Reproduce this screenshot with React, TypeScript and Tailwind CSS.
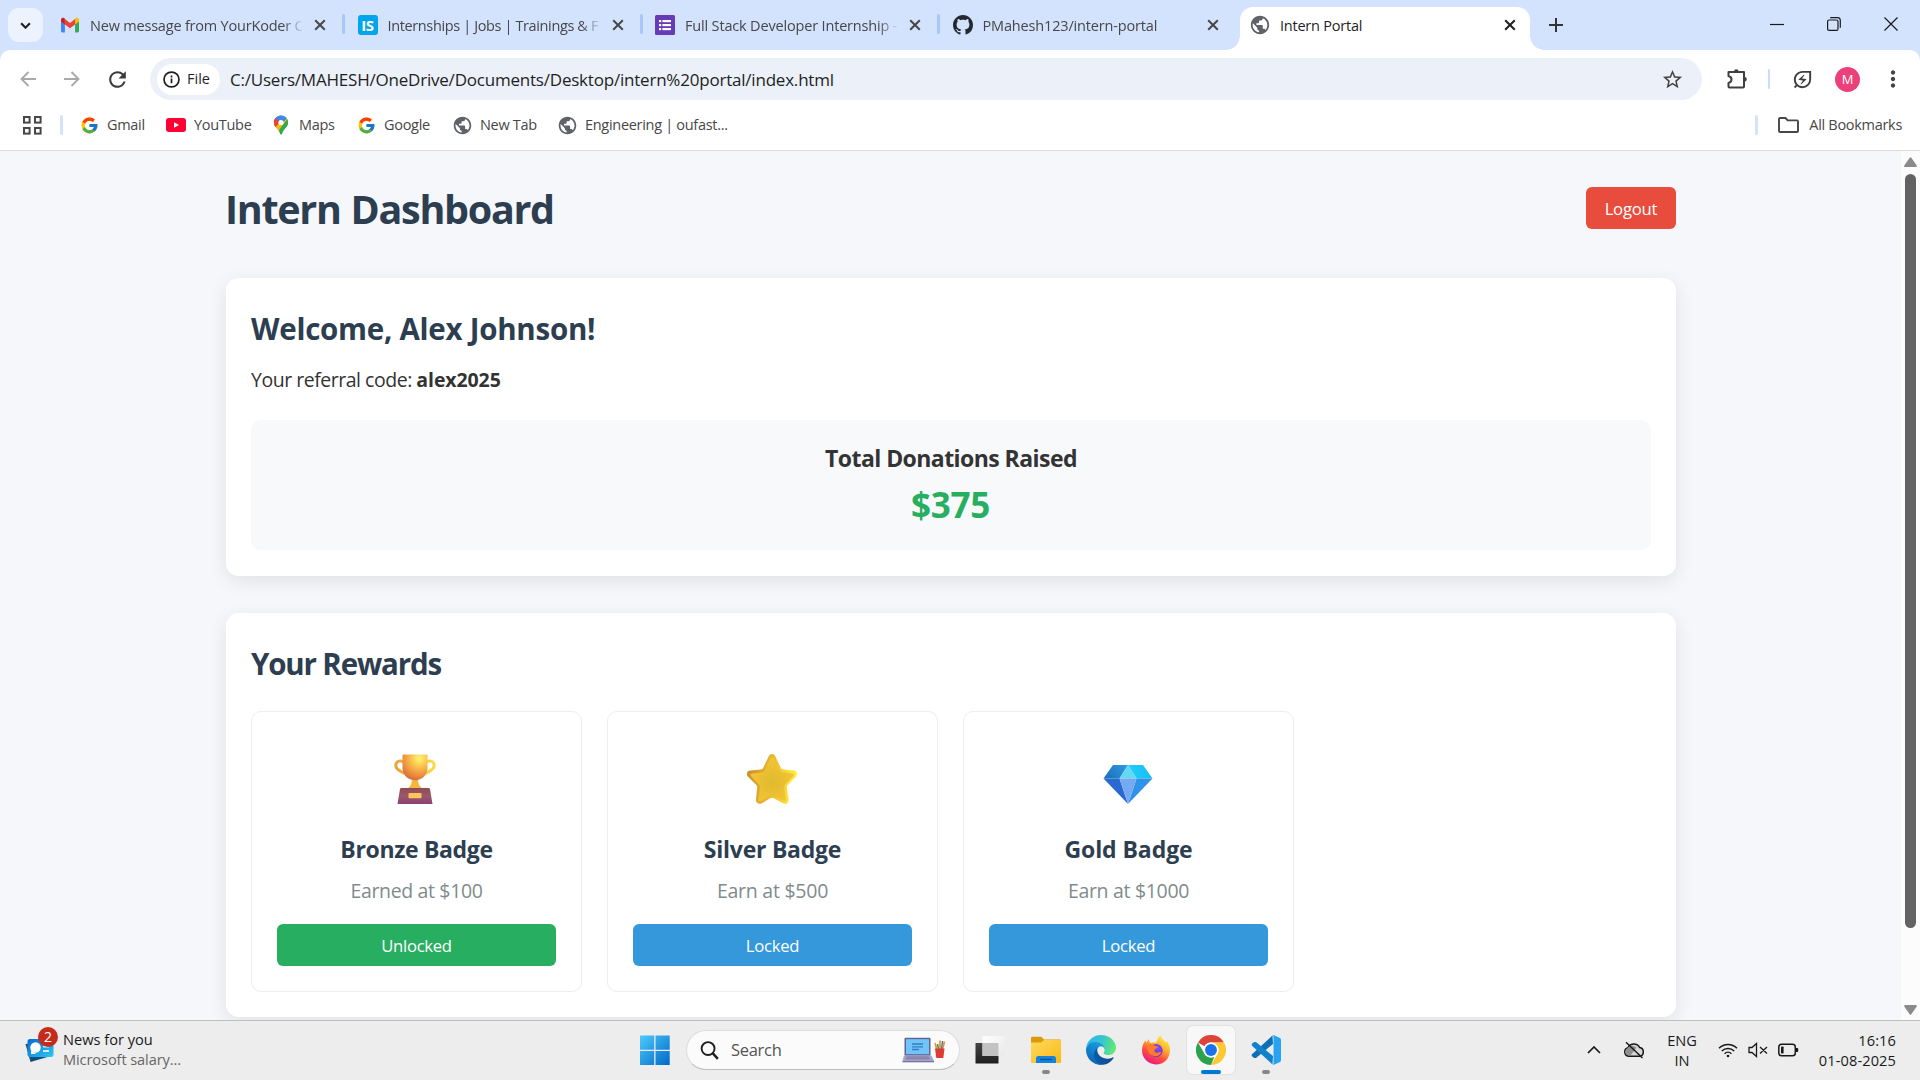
import React from "react";
import { FcGoogle } from "react-icons/fc";
import {
  MdPublic,
  MdStarBorder,
  MdMoreVert,
  MdRefresh,
  MdOutlineEnergySavingsLeaf,
} from "react-icons/md";

/* ---------- Brand and favicon drawings ---------- */

function GmailIcon() {
  return (
    <svg viewBox="0 0 20 20" className="size-5">
      <path d="M1 5.5V16a1.4 1.4 0 0 0 1.4 1.4h2.5V8.6z" fill="#4285f4" />
      <path d="M15.1 8.6v8.8h2.5A1.4 1.4 0 0 0 19 16V5.5z" fill="#34a853" />
      <path d="M15.1 4.1v5.4L19 6.6V4.8c0-1.8-2-2.8-3.4-1.7z" fill="#fbbc04" />
      <path d="M4.9 9.5V4.1L10 7.9l5.1-3.8v5.4L10 13.3z" fill="#ea4335" />
      <path d="M1 4.8v1.8l3.9 2.9V4.1l-.5-1C3 2 1 3 1 4.8z" fill="#c5221f" />
    </svg>
  );
}

function InternshalaIcon() {
  return (
    <span className="flex size-5 items-center justify-center rounded-[3px] bg-[#00a5ec] font-['Open_Sans',sans-serif] text-[15px] font-bold leading-none tracking-[-0.3px] text-white">
      IS
    </span>
  );
}

function FormsIcon() {
  return (
    <svg viewBox="0 0 20 20" className="size-5">
      <rect width="20" height="20" rx="1.5" fill="#673ab7" />
      <g fill="#fff">
        <rect x="4" y="5" width="2.2" height="2.2" />
        <rect x="4" y="9" width="2.2" height="2.2" />
        <rect x="4" y="13" width="2.2" height="2.2" />
        <rect x="7.4" y="5" width="8.6" height="2.2" />
        <rect x="7.4" y="9" width="8.6" height="2.2" />
        <rect x="7.4" y="13" width="8.6" height="2.2" />
      </g>
    </svg>
  );
}

function GithubIcon() {
  return (
    <svg viewBox="0 0 16 16" className="size-5" fill="#24292f">
      <path d="M8 0C3.58 0 0 3.58 0 8c0 3.54 2.29 6.53 5.47 7.59.4.07.55-.17.55-.38 0-.19-.01-.82-.01-1.49-2.01.37-2.53-.49-2.69-.94-.09-.23-.48-.94-.82-1.13-.28-.15-.68-.52-.01-.53.63-.01 1.08.58 1.23.82.72 1.21 1.87.87 2.33.66.07-.52.28-.87.51-1.07-1.78-.2-3.64-.89-3.64-3.95 0-.87.31-1.59.82-2.15-.08-.2-.36-1.02.08-2.12 0 0 .67-.21 2.2.82.64-.18 1.32-.27 2-.27s1.36.09 2 .27c1.53-1.04 2.2-.82 2.2-.82.44 1.1.16 1.92.08 2.12.51.56.82 1.27.82 2.15 0 3.07-1.87 3.75-3.65 3.95.29.25.54.73.54 1.48 0 1.07-.01 1.93-.01 2.2 0 .21.15.46.55.38A8.01 8.01 0 0 0 16 8c0-4.42-3.58-8-8-8z" />
    </svg>
  );
}

function YouTubeIcon() {
  return (
    <svg viewBox="0 0 20 20" className="size-5">
      <rect y="3" width="20" height="14" rx="3" fill="#ff0033" />
      <path d="M8 7.2v5.6l5-2.8z" fill="#fff" />
    </svg>
  );
}

function MapsIcon() {
  return (
    <svg viewBox="0 0 20 20" className="size-5">
      <clipPath id="pin">
        <path d="M10 .5a7 7 0 0 0-7 7c0 5 4.4 5.600 6 11.200.3 1 1.700 1 2 0C12.600 13.100 17 12.500 17 7.500a7 7 0 0 0-7-7z" />
      </clipPath>
      <g clipPath="url(#pin)">
        <rect width="20" height="20" fill="#34a853" />
        <path d="M0 14L16 0h4v3L5 20z" fill="#fbbc04" />
        <path d="M4 2l5 5-7 8-2-8z" fill="#ea4335" />
        <path d="M4 2L10-1l7 3.500L9 10z" fill="#4285f4" />
        <path d="M4 2.500L9 7 3 13V3z" fill="#ea4335" />
        <path d="M17 3L8 15l3 5 9-8z" fill="#34a853" />
      </g>
      <circle cx="10" cy="7.500" r="2.600" fill="#fff" />
    </svg>
  );
}

const Globe = () => <MdPublic className="size-[22px] text-[#5f6368]" />;

/* ---------- Tab strip ---------- */

function CloseX({ dark }: { dark?: boolean }) {
  return (
    <svg viewBox="0 0 12 12" className="size-3 shrink-0" stroke={dark ? "#1f1f1f" : "#474747"} strokeWidth="2" fill="none">
      <path d="M1.200 1.200l9.600 9.600M10.800 1.200L1.200 10.800" />
    </svg>
  );
}

const tabs = [
  { icon: <GmailIcon />, title: "New message from YourKoder C", cls: "tracking-[-0.2px]" },
  { icon: <InternshalaIcon />, title: "Internships | Jobs | Trainings & F", cls: "tracking-[-0.37px]" },
  { icon: <FormsIcon />, title: "Full Stack Developer Internship -", cls: "tracking-[-0.17px]" },
  { icon: <GithubIcon />, title: "PMahesh123/intern-portal", cls: "tracking-[-0.16px]" },
];

function TabStrip() {
  return (
    <div className="flex h-[50px] items-start bg-[#d3e3fd] text-[14.5px] text-[#474747]">
      <div className="ml-2 mt-2 flex h-[34px] w-[35px] items-center justify-center rounded-[11px] bg-[#ecf2fe]">
        <svg viewBox="0 0 12 8" className="h-[7px] w-[11px]" fill="none" stroke="#1f1f1f" strokeWidth="2.400">
          <path d="M1 1.500l5 5 5-5" />
        </svg>
      </div>
      <div className="ml-[7px] flex">
        {tabs.map((t, i) => (
          <div key={t.title} className="flex h-[50px] w-[297.500px] items-center pl-[10px]">
            <span className="flex size-5 shrink-0">{t.icon}</span>
            <span className={"ml-[10px] w-[212px] whitespace-nowrap pt-px [mask-image:linear-gradient(to_right,#000_91%,transparent_101%)] " + t.cls}>
              {t.title}
            </span>
            <span className="ml-[12px] flex"><CloseX /></span>
            <span className={i < 3 ? "ml-[16px] -mt-[2px] h-5 w-[3px] rounded bg-[#a8c7fa]" : "hidden"} />
          </div>
        ))}
        <div className="relative mt-[7px] flex h-[43px] w-[290px] items-center rounded-t-[13px] bg-white pl-[9px] pb-[7px] text-[#1f1f1f] before:absolute before:bottom-0 before:-left-[14px] before:size-[14px] before:bg-[radial-gradient(circle_at_0_0,transparent_13.500px,#fff_14px)] after:absolute after:bottom-0 after:-right-[14px] after:size-[14px] after:bg-[radial-gradient(circle_at_100%_0,transparent_13.500px,#fff_14px)]">
          <Globe />
          <span className="ml-[9px] w-[224px] pt-px tracking-[-0.22px]">Intern Portal</span>
          <CloseX dark />
        </div>
      </div>
      <svg viewBox="0 0 14 14" className="ml-[19px] mt-[18px] size-[14px]" stroke="#333" strokeWidth="2">
        <path d="M7 0v14M0 7h14" />
      </svg>
      <div className="ml-auto mr-[22px] mt-[17px] flex items-center gap-[43px] text-[#1a1a1a]">
        <svg viewBox="0 0 14 14" className="size-[14px]" stroke="currentColor" strokeWidth="1.200"><path d="M0 7.500h14" /></svg>
        <svg viewBox="0 0 14 14" className="size-[14px]" fill="none" stroke="currentColor" strokeWidth="1.200">
          <rect x=".6" y="3" width="10.400" height="10.400" rx="1.500" />
          <path d="M3.200 .7h7.300a2.800 2.800 0 0 1 2.800 2.800v7.300" />
        </svg>
        <svg viewBox="0 0 14 14" className="size-[14px]" stroke="currentColor" strokeWidth="1.200"><path d="M.5.500l13 13M13.500.500l-13 13" /></svg>
      </div>
    </div>
  );
}

/* ---------- Toolbar ---------- */

function Toolbar() {
  return (
    <div className="bg-[#d3e3fd]">
      <div className="flex h-[58px] items-center rounded-t-[10px] bg-white pl-[20px]">
        <svg viewBox="0 0 16 16" className="size-4" fill="none" stroke="#a9a9a9" strokeWidth="1.900">
          <path d="M16 8H1.500M8.500 1L1.500 8l7 7" />
        </svg>
        <svg viewBox="0 0 16 16" className="ml-[28px] size-4" fill="none" stroke="#a9a9a9" strokeWidth="1.900">
          <path d="M0 8h14.500M7.500 1l7 7-7 7" />
        </svg>
        <MdRefresh className="ml-[25px] size-[25px] text-[#3c3c3c]" />
        <div className="ml-[20px] flex h-[42px] w-[1552px] items-center rounded-full bg-[#ebf0f9] pl-[7px]">
          <div className="flex h-[31px] w-[63px] items-center rounded-full bg-white pl-[6px] text-[14.5px] font-medium text-[#1f1f1f]">
            <svg viewBox="0 0 18 18" className="size-[17px]" fill="none" stroke="#1f1f1f" strokeWidth="1.800">
              <circle cx="9" cy="9" r="7.900" />
              <path d="M9 8v5M9 4.800v2" />
            </svg>
            <span className="ml-[7px]">File</span>
          </div>
          <span className="ml-[10px] pt-px text-[17px] tracking-[-0.21px] text-[#1f1f1f]">
            C:/Users/MAHESH/OneDrive/Documents/Desktop/intern%20portal/index.html
          </span>
          <MdStarBorder className="ml-auto mr-[18px] size-[23px] text-[#444]" />
        </div>
        <svg viewBox="0 0 22 22" className="ml-[24px] size-[22px]" fill="none" stroke="#3f3f3f" strokeWidth="2" strokeLinejoin="round">
          <path d="M2.500 4H18v14.500a1 1 0 0 1-1 1H3.500a1 1 0 0 1-1-1V15c4-1 4-6 0-7z" />
          <path d="M8 3.500a2.300 2.300 0 0 1 4.600 0zM18.500 9a2.300 2.300 0 0 1 0 4.600z" fill="#3f3f3f" stroke="none" />
        </svg>
        <span className="ml-[20px] h-5 w-[2px] rounded bg-[#c9dcfb]" />
        <MdOutlineEnergySavingsLeaf className="ml-[21px] size-[23px] text-[#3f3f3f]" />
        <span className="ml-[21px] flex size-[25px] items-center justify-center rounded-full bg-[#ec407a] text-[13px] leading-none text-white">M</span>
        <MdMoreVert className="ml-[20px] size-[26px] text-[#444]" />
      </div>
    </div>
  );
}

/* ---------- Bookmarks bar ---------- */

function Bookmark({ icon, cls, children }: { icon: React.ReactNode; cls: string; children: React.ReactNode }) {
  return (
    <div className={"flex items-center " + cls}>
      <span className="flex w-[22px] shrink-0 justify-center">{icon}</span>
      <span className="ml-[7px] whitespace-nowrap">{children}</span>
    </div>
  );
}

function BookmarksBar() {
  const g = <FcGoogle className="size-[19px]" />;
  return (
    <div className="flex h-[43px] items-center border-b border-[#dcdcdc] bg-white pb-[8px] text-[14.500px] tracking-[-0.3px] text-[#474747]">
      <svg viewBox="0 0 19 19" className="ml-[23px] size-[19px]" fill="none" stroke="#474747" strokeWidth="2">
        <rect x="1" y="1" width="5.600" height="5.600" />
        <rect x="12" y="1" width="5.600" height="5.600" />
        <rect x="1" y="12" width="5.600" height="5.600" />
        <rect x="12" y="12" width="5.600" height="5.600" />
      </svg>
      <span className="ml-[18px] h-5 w-[3px] rounded bg-[#d3e3fd]" />
      <Bookmark icon={g} cls="ml-[15px] w-[87px]">Gmail</Bookmark>
      <Bookmark icon={<YouTubeIcon />} cls="w-[105px]">YouTube</Bookmark>
      <Bookmark icon={<MapsIcon />} cls="w-[85px]">Maps</Bookmark>
      <Bookmark icon={g} cls="w-[96px]">Google</Bookmark>
      <Bookmark icon={<MdPublic className="size-[21px] text-[#5f6368]" />} cls="w-[105px]">New Tab</Bookmark>
      <Bookmark icon={<MdPublic className="size-[21px] text-[#5f6368]" />} cls="">Engineering | oufast...</Bookmark>
      <span className="ml-auto h-5 w-[3px] rounded bg-[#d3e3fd]" />
      <svg viewBox="0 0 21 16" className="ml-[20px] h-4 w-[21px]" fill="none" stroke="#474747" strokeWidth="1.900" strokeLinejoin="round">
        <path d="M1 2a1 1 0 0 1 1-1h5.500l2.200 2.400H19a1 1 0 0 1 1 1V14a1 1 0 0 1-1 1H2a1 1 0 0 1-1-1z" />
      </svg>
      <span className="ml-[10px] mr-[18px]">All Bookmarks</span>
    </div>
  );
}

/* ---------- Reward artwork ---------- */

function Trophy() {
  return (
    <svg viewBox="0 0 42 50" className="-ml-[3px] h-[50px] w-[42px]">
      <defs>
        <radialGradient id="cup" cx=".68" cy=".15" r=".85">
          <stop offset="0" stopColor="#fff778" />
          <stop offset=".35" stopColor="#fcc850" />
          <stop offset=".8" stopColor="#ea8c3e" />
          <stop offset="1" stopColor="#d9703f" />
        </radialGradient>
        <linearGradient id="handle" gradientUnits="userSpaceOnUse" x1="0" y1="0" x2="42" y2="0">
          <stop offset="0" stopColor="#e8a03a" />
          <stop offset="1" stopColor="#ffdc40" />
        </linearGradient>
        <linearGradient id="base" x2="0" y2="1">
          <stop offset="0" stopColor="#8f4a55" />
          <stop offset=".5" stopColor="#9b586a" />
          <stop offset="1" stopColor="#8b4074" />
        </linearGradient>
      </defs>
      <path d="M10 8C5 5.500 1.800 8 1.800 11.500c0 4.500 5 5.500 9 8M32 8c5-2.500 8.200 0 8.200 3.500 0 4.500-5 5.500-9 8" fill="none" stroke="url(#handle)" strokeWidth="3" />
      <path d="M18 24h6c0 6 1.500 8.500 5 11H13c3.500-2.500 5-5 5-11z" fill="#f5b63c" />
      <path d="M9.500.500h23a1 1 0 0 1 1 1V14c0 7-5.500 12.300-12.500 12.300S8.500 21 8.500 14V1.500a1 1 0 0 1 1-1z" fill="url(#cup)" />
      <path d="M7.500 34h27a1.500 1.500 0 0 1 1.500 1L38.500 50h-35L6 35a1.500 1.500 0 0 1 1.500-1z" fill="url(#base)" />
      <rect x="14.500" y="39" width="13" height="5.300" rx=".8" fill="#fdc55c" />
    </svg>
  );
}

function Star() {
  return (
    <svg viewBox="0 0 50 50" className="-ml-px size-[50px]">
      <defs>
        <radialGradient id="star" cx=".5" cy=".55" r=".55">
          <stop offset="0" stopColor="#e0b92f" />
          <stop offset=".65" stopColor="#edc132" />
          <stop offset="1" stopColor="#f3c53a" />
        </radialGradient>
        <linearGradient id="rim" x1="0" y1=".3" x2="1" y2=".4">
          <stop offset="0" stopColor="#c98f2c" />
          <stop offset=".5" stopColor="#eeb92f" />
          <stop offset="1" stopColor="#fff03a" />
        </linearGradient>
      </defs>
      <path d="M21.700 2.200c1.400-2.900 5.200-2.900 6.600 0l5.500 11.500c.5 1 1.300 1.600 2.300 1.700l10.700 1.200c3.200.4 4.300 4 2 6.100l-8 8c-.8.800-1.200 1.800-1 2.900l1.800 11.300c.5 3.500-2.500 6-5.500 4.300l-9.300-5a3.600 3.600 0 0 0-3.600 0l-8.300 5c-3 1.700-6.300-.5-5.900-4l1.200-11.600c.1-1.100-.2-2.100-1-2.900l-8.200-8c-2.200-2.200-1-5.800 2-6.100l11-1.200c1-.1 1.800-.7 2.300-1.700z" fill="url(#rim)" />
      <path d="M23 5c1-1.700 3-1.700 4 0l5.300 11 2.700 2.200 10.500 1.300c1.600.2 1.800 1.600.8 2.500L38 30.500l-.9 3.200 1.800 11.300c.2 1.600-1 2.300-2.300 1.700L25 41l-11.300 5.900c-1.300.7-2.500 0-2.300-1.700L13 34l-1-3.200L4 22.300c-1-1-.7-2.300.8-2.500l11-1.500 2.400-2.200z" fill="url(#star)" />
    </svg>
  );
}

function Diamond() {
  return (
    <svg viewBox="0 0 50 50" className="-ml-px size-[50px]">
      <defs>
        <linearGradient id="dl" x1="0" x2="1" y1=".5" y2="0"><stop stopColor="#1c74bf" /><stop offset="1" stopColor="#2f9be0" /></linearGradient>
        <linearGradient id="dr"><stop stopColor="#1fcdfc" /><stop offset="1" stopColor="#1cbdf2" /></linearGradient>
      </defs>
      <path d="M10 11h15l-8.500 13.500H.5z" fill="url(#dl)" />
      <path d="M25 11h15l9.500 13.500h-16z" fill="url(#dr)" />
      <path d="M25 11l8.500 13.500h-17z" fill="#62d8f5" />
      <path d="M.5 24.500h16L25 50z" fill="#2a68d2" />
      <path d="M49.500 24.500h-16L25 50z" fill="#3192ea" />
      <path d="M16.500 24.500h17L25 50z" fill="#75a9f2" />
    </svg>
  );
}

/* ---------- Dashboard ---------- */

const rewards = [
  { art: <Trophy />, name: "Bronze Badge", nameCls: "tracking-[-0.35px]", note: "Earned at $100", noteCls: "tracking-[-0.35px]", action: "Unlocked", btn: "bg-[#27ae60] tracking-[-0.3px]" },
  { art: <Star />, name: "Silver Badge", nameCls: "tracking-[-0.25px]", note: "Earn at $500", noteCls: "tracking-[-0.25px]", action: "Locked", btn: "bg-[#3498db] tracking-[-0.25px]" },
  { art: <Diamond />, name: "Gold Badge", nameCls: "tracking-[-0.08px]", note: "Earn at $1000", noteCls: "tracking-[-0.32px]", action: "Locked", btn: "bg-[#3498db] tracking-[-0.25px]" },
];

function Dashboard() {
  return (
    <main className="flex-1 overflow-hidden bg-[#f5f7fb] pl-[226px] pt-9 text-[#333]">
      <header className="flex h-[42px] w-[1450px] items-center justify-between">
        <h1 className="-ml-px pt-[3px] text-[39.500px] font-bold tracking-[-1.300px] text-[#2c3e50] [word-spacing:1px]">Intern Dashboard</h1>
        <button className="h-[42px] w-[90px] rounded-[6px] bg-[#e74c3c] pt-px text-[16.670px] tracking-[-0.2px] text-white">Logout</button>
      </header>

      <section className="mt-[49px] h-[298px] w-[1450px] rounded-[12.500px] bg-white px-[25px] pt-[25px] shadow-[0_5px_19px_rgba(0,0,0,0.09)]">
        <h2 className="pt-px text-[29.500px] font-bold leading-[50px] tracking-[-0.26px] text-[#2c3e50]">Welcome, Alex Johnson!</h2>
        <p className="mt-[6px] text-[19.500px] leading-[40px] tracking-[-0.48px]">
          Your referral code: <strong className="tracking-[-0.1px]">alex2025</strong>
        </p>
        <div className="mt-[20px] flex h-[130px] flex-col items-center rounded-[10px] bg-[#f8f9fb] pt-5">
          <h3 className="text-[23px] font-bold leading-[36px] tracking-[-0.56px]">Total Donations Raised</h3>
          <p className="pr-px text-[35px] font-bold leading-[57px] tracking-[-0.3px] text-[#27ae60]">$375</p>
        </div>
      </section>

      <section className="mt-[37px] h-[404px] w-[1450px] rounded-[12.500px] bg-white px-[25px] pt-[25px] shadow-[0_5px_19px_rgba(0,0,0,0.09)]">
        <h2 className="pt-px text-[29.500px] font-bold leading-[50px] tracking-[-1.150px] text-[#2c3e50]">Your Rewards</h2>
        <div className="mt-[22px] flex gap-[25px]">
          {rewards.map((r) => (
            <article key={r.name} className="flex h-[281px] w-[331px] flex-col items-center rounded-[10px] border border-[#eee] px-[25px] pt-[42px] text-center">
              {r.art}
              <h3 className={"mt-[29px] text-[23px] font-bold leading-[32px] text-[#2c3e50] " + r.nameCls}>{r.name}</h3>
              <p className={"mt-[11px] text-[19.500px] leading-[30px] text-[#7f8c8d] " + r.noteCls}>{r.note}</p>
              <button className={"mt-[18px] h-[42px] w-[279px] shrink-0 rounded-[6px] pt-px text-[16.670px] text-white " + r.btn}>{r.action}</button>
            </article>
          ))}
        </div>
      </section>
    </main>
  );
}

function Scrollbar() {
  return (
    <div className="flex w-[19px] flex-col items-center bg-[#fcfcfc]">
      <svg viewBox="0 0 13 10" className="mt-[6px] h-[10px] w-[13px]" fill="#8b8b8b"><path d="M5.700.800a1 1 0 0 1 1.600 0l5.300 7.400A1.100 1.100 0 0 1 11.700 10H1.300a1.100 1.100 0 0 1-.9-1.800z" /></svg>
      <div className="mt-[7px] h-[754px] w-[11px] rounded-full bg-[#636363]" />
      <svg viewBox="0 0 13 10" className="mt-[77px] h-[10px] w-[13px]" fill="#8b8b8b"><path d="M5.700 9.200a1 1 0 0 0 1.600 0l5.300-7.400A1.100 1.100 0 0 0 11.700 0H1.300a1.100 1.100 0 0 0-.9 1.800z" /></svg>
    </div>
  );
}

/* ---------- Taskbar ---------- */

function NewsIcon() {
  return (
    <svg viewBox="0 0 36 36" className="h-9 w-9">
      <defs>
        <linearGradient id="news" x2="1" y2="1"><stop stopColor="#0669d4" /><stop offset="1" stopColor="#2dc8f0" /></linearGradient>
      </defs>
      <path d="M12 13l6-6v8z" fill="#4cb36b" />
      <path d="M.500 17l20-2 2 15-17 5z" fill="#114f7f" />
      <rect x="2.500" y="12" width="26" height="18" rx="2.500" fill="url(#news)" />
      <circle cx="10.500" cy="20.500" r="5.200" fill="#fff" />
      <path d="M6 23v4h5z" fill="#fff" />
      <path d="M18 19.500h6M18 24h6" stroke="#c9f1ff" strokeWidth="1.800" />
    </svg>
  );
}

function LaptopIcon() {
  return (
    <svg viewBox="0 0 44 26" className="h-[26px] w-[44px]">
      <rect x="2.500" y=".8" width="26" height="18" rx="1" fill="#5c6694" />
      <rect x="4" y="2.200" width="23" height="15" fill="#71c3f8" />
      <path d="M10 7h11M10 9.800h11M10 12.500h7" stroke="#2f7fc4" strokeWidth="1.300" />
      <path d="M2 18.500h27.500l2.500 5.500H.5z" fill="#a7a3c9" />
      <path d="M4.500 20h22.500M3.700 21.800h24" stroke="#6b6793" strokeWidth=".8" />
      <path d="M.5 24H32v1.300H.500z" fill="#77729e" />
      <path d="M35 13l-2-7M38 12V3.500M40.500 12l2-7.500" stroke="#e8962e" strokeWidth="1.800" />
      <path d="M36.500 12l-1-5" stroke="#3d8f68" strokeWidth="1.500" />
      <path d="M39.500 12l1-8" stroke="#396bb5" strokeWidth="1.200" />
      <path d="M33 11.500h9.500l-1.200 9.500h-7z" fill="#de3b36" />
    </svg>
  );
}

function TaskViewIcon() {
  return (
    <svg viewBox="0 0 30 30" className="size-[30px]">
      <defs>
        <linearGradient id="tv" x2="0" y2="1"><stop stopColor="#444" /><stop offset="1" stopColor="#1e1e1e" /></linearGradient>
        <linearGradient id="tf" x2="1" y2="1"><stop stopColor="#fff" /><stop offset="1" stopColor="#e8e8e8" /></linearGradient>
      </defs>
      <rect x=".5" y="8" width="23" height="20.500" rx=".6" fill="url(#tv)" />
      <rect x="7.500" y="1" width="22" height="20" rx=".6" fill="url(#tf)" />
      <path d="M7.500 8h16v13h-16z" fill="#c2c2c2" />
    </svg>
  );
}

function FolderIcon() {
  return (
    <svg viewBox="0 0 30 28" className="h-[28px] w-[30px]">
      <defs>
        <linearGradient id="fo" x2="1" y2="1"><stop stopColor="#ffd95e" /><stop offset="1" stopColor="#fbb916" /></linearGradient>
      </defs>
      <path d="M0 2a1.200 1.200 0 0 1 1.200-1.200h9L13 3.500h15.800A1.200 1.200 0 0 1 30 4.700V10H0z" fill="#dd9a06" />
      <path d="M0 6.500h10l3-2.500h17V26a1 1 0 0 1-1 1H1a1 1 0 0 1-1-1z" fill="url(#fo)" />
      <path d="M5 27v-4.500A2.500 2.500 0 0 1 7.500 20h15a2.500 2.500 0 0 1 2.500 2.500V27z" fill="#1583dc" />
      <path d="M9 23.500h12" stroke="#0b4f95" strokeWidth="1.300" />
    </svg>
  );
}

function EdgeIcon() {
  return (
    <svg viewBox="0 0 256 256" className="size-[30px]">
      <defs>
        <linearGradient id="e1" x1=".2" x2="1" y1=".5" y2=".5"><stop stopColor="#0c59a4" /><stop offset="1" stopColor="#114a8b" /></linearGradient>
        <linearGradient id="e2" x1=".6" x2=".2" y1="0" y2="1"><stop stopColor="#1b9de2" /><stop offset="1" stopColor="#0a5fb5" /></linearGradient>
        <linearGradient id="e3" x1="0" x2="1" y1=".4" y2=".6"><stop stopColor="#2db5e8" /><stop offset=".5" stopColor="#36c6cf" /><stop offset="1" stopColor="#66eb6e" /></linearGradient>
      </defs>
      <path d="M231 190.500c-3.400 1.800-7 3.400-10.600 4.700a101.900 101.900 0 0 1-35.900 6.400c-47.300 0-88.500-32.500-88.500-74.300 0-11.300 6.400-22 16.100-27.200C69.300 101.800 58 146.400 58 172.500c0 73.800 68 81.300 82.700 81.300 7.900 0 19.800-2.300 27-4.600l1.300-.4a128.300 128.300 0 0 0 66.600-52.800 4 4 0 0 0-4.600-5.500z" fill="url(#e1)" />
      <path d="M105.700 241.400A79.200 79.200 0 0 1 83 220a80.700 80.700 0 0 1 29.500-120c3.100-1.500 8.500-4.100 15.600-4a32.400 32.400 0 0 1 25.700 13 32 32 0 0 1 6.300 18.700c0-.2 24.500-79.600-80-79.600-43.900 0-80 41.600-80 78.200a130 130 0 0 0 12.100 56 128 128 0 0 0 156.400 67 75.600 75.600 0 0 1-62.800-8z" fill="url(#e2)" />
      <path d="M152.300 148.900c-.8 1-3.300 2.500-3.300 5.700 0 2.600 1.700 5.100 4.700 7.200 14.400 10 41.500 8.700 41.600 8.700 10.700 0 21.100-2.900 30.300-8.300A61.400 61.400 0 0 0 256 109.300c.3-22.400-8-37.300-11.300-43.900C223.500 23.900 177.700 0 128 0A128 128 0 0 0 0 126.200c.5-36.500 36.800-66 80-66 3.500 0 23.500.3 42 10.100 16.300 8.600 24.900 19 30.800 29.200 6.200 10.700 7.300 24.100 7.300 29.500 0 5.300-2.700 13.300-7.800 19.900z" fill="url(#e3)" />
    </svg>
  );
}

function FirefoxIcon() {
  return (
    <svg viewBox="0 0 30 30" className="size-[30px]">
      <defs>
        <linearGradient id="f1" x1=".8" x2=".25" y1="0" y2="1"><stop stopColor="#fff04a" /><stop offset=".35" stopColor="#ffb52b" /><stop offset=".65" stopColor="#ff4f3d" /><stop offset="1" stopColor="#e8128f" /></linearGradient>
        <radialGradient id="f2" cx=".6" cy=".3" r=".8"><stop stopColor="#8a4bf0" /><stop offset="1" stopColor="#5d2fc9" /></radialGradient>
      </defs>
      <path d="M19.500.500c1 3 3.200 4.400 5 6.700 1.300-.3 1.500-1 1.500-1 2 3 3 6 3 9.300C29 23.500 22.800 29.500 15 29.500S1 23.300 1 15.600C1 11.500 2.300 8 4.500 5.300c.1 1.400.4 2 .8 2.500C6.500 5.500 7 5 8 4.200c.1 2 .7 3 1.800 3.800 2-.8 3.800-.6 5.200-.1 1.300-3.300 2.300-5.800 4.500-7.400z" fill="url(#f1)" />
      <circle cx="15.200" cy="15.500" r="6.500" fill="url(#f2)" />
      <path d="M6 11c3-3 6-2 7.500-.5 1 .8 2.600.8 3.500 1-.5 2-3 2.300-3.500 3.500-.6 1.500.8 3.200 3 2.700 1.500-.3 2.500-1.200 3.800-.6-1 3.200-4 4.700-7 4C8.500 20 6 16 6 11z" fill="#ff7b2e" />
    </svg>
  );
}

function ChromeIcon() {
  return (
    <svg viewBox="0 0 48 48" className="size-[30px]">
      <circle cx="24" cy="24" r="24" fill="#fff" />
      <path d="M3.200 12A24 24 0 0 1 44.800 12H24a12 12 0 0 0-10.400 6z" fill="#db4437" />
      <path d="M3.200 12L13.600 30A12 12 0 0 0 24 36l5.200-1L24 48A24 24 0 0 1 3.200 12z" fill="#2ba24c" />
      <path d="M44.800 12A24 24 0 0 1 24 48l10.400-18a12 12 0 0 0 0-12L24 12z" fill="#fcc934" />
      <circle cx="24" cy="24" r="12" fill="#fff" />
      <circle cx="24" cy="24" r="9.500" fill="#1a73e8" />
    </svg>
  );
}

function VsCodeIcon() {
  return (
    <svg viewBox="0 0 30 30" className="size-[30px]">
      <path d="M21.500 0.500L1 19.300l-.3 1.700 2.500 2L5 23 22 9z" fill="#0e6fb5" />
      <path d="M21.500 29.500L1 10.700.700 9l2.500-2H5l17 14z" fill="#1382cc" />
      <path d="M21.500.500c.7-.5 1.500-.4 2 0l5.500 2.600c.6.300 1 .9 1 1.600v20.600c0 .7-.4 1.300-1 1.600l-5.500 2.600c-.6.300-1.400.2-2-.300.500.200 1-.2 1-1V2c0-.8-.5-1.300-1-1.500z" fill="#27a3f1" />
    </svg>
  );
}

function TaskApp({ cls, dot, children }: { cls: string; dot?: boolean; children: React.ReactNode }) {
  return (
    <div className={"flex h-12 flex-col items-center " + cls}>
      <span className="mt-[9px] flex h-[30px] items-center">{children}</span>
      {dot && <span className="mt-[5px] h-1 w-2 rounded-full bg-[#878787]" />}
    </div>
  );
}

function Taskbar() {
  return (
    <footer className="flex h-[60px] items-start border-t border-[#bfbfbf] bg-[#ededed] text-[14.600px] text-[#1a1a1a]">
      <div className="relative ml-[25px] mt-[6px]">
        <NewsIcon />
        <span className="absolute top-0 left-[13px] flex size-[20px] items-center justify-center rounded-full bg-[#c42b1c] text-[14px] leading-none text-white">2</span>
      </div>
      <div className="ml-[2px] mt-[8px] w-[573px] leading-5">
        <div>News for you</div>
        <div className="tracking-[-0.1px] text-[#666]">Microsoft salary...</div>
      </div>

      <svg viewBox="0 0 30 30" className="mt-[14px] ml-[4px] size-[30px]">
        <defs>
          <linearGradient id="win" gradientUnits="userSpaceOnUse" x1="0" y1="0" x2="30" y2="30"><stop stopColor="#4dccfb" /><stop offset="1" stopColor="#0067c8" /></linearGradient>
        </defs>
        <path d="M0 .500h14.200v14.200H0zM15.500.500H29.700v14.200H15.500zM0 16h14.200v14H0zM15.500 16H29.700v14H15.500z" fill="url(#win)" />
      </svg>

      <div className="ml-[16px] mt-[9px] flex h-[40px] w-[274px] items-center rounded-full border border-[#dcdcdc] border-b-[#bdbdbd] bg-[#fbfbfb] pl-[13px]">
        <svg viewBox="0 0 20 20" className="size-[19px]" fill="none" stroke="#1f1f1f" strokeWidth="2">
          <circle cx="8.500" cy="8" r="6.800" />
          <path d="M13.300 12.800l5.500 6" strokeWidth="2.600" />
        </svg>
        <span className="ml-[12px] pt-px text-[16.500px] tracking-[-0.3px] text-[#555]">Search</span>
        <span className="ml-auto mr-[13px]"><LaptopIcon /></span>
      </div>

      <div className="mt-[5px] flex">
        <TaskApp cls="ml-[15px] w-[30px]"><TaskViewIcon /></TaskApp>
        <TaskApp cls="ml-[26px] w-[30px]" dot><FolderIcon /></TaskApp>
        <TaskApp cls="ml-[25px] w-[30px]"><EdgeIcon /></TaskApp>
        <TaskApp cls="ml-[25px] w-[30px]"><FirefoxIcon /></TaskApp>
        <div className="ml-[16px] flex h-[48px] w-[48px] flex-col items-center rounded-[6px] bg-[#f8f8f8] shadow-[0_0_0_1px_#e2e2e2]">
          <span className="mt-[9px]"><ChromeIcon /></span>
          <span className="mt-[5px] h-1 w-5 rounded-full bg-[#0078d4]" />
        </div>
        <TaskApp cls="ml-[16px] w-[30px]" dot><VsCodeIcon /></TaskApp>
      </div>

      <div className="ml-auto mr-[24px] flex h-[57px] items-center">
        <svg viewBox="0 0 14 8" className="h-2 w-[14px]" fill="none" stroke="#1a1a1a" strokeWidth="1.700"><path d="M1 7l6-6 6 6" /></svg>
        <svg viewBox="0 0 22 18" className="ml-[22px] h-[18px] w-[22px]">
          <path d="M5.500 15.200A4.400 4.400 0 0 1 5 6.600a6.500 6.500 0 0 1 11.700 0 4.400 4.400 0 0 1 .300 8.600z" fill="#d8d8d8" stroke="#1a1a1a" strokeWidth="1.500" />
          <path d="M5 6.600c2.500-2.600 5-2.200 8.500-.2L8 14H5.500A3.700 3.700 0 0 1 2 10.500z" fill="#8f8f8f" />
          <path d="M3 1.200l16.500 15.800" stroke="#1a1a1a" strokeWidth="1.500" />
        </svg>
        <div className="ml-[21px] w-[32px] text-center leading-5">ENG<br />IN</div>
        <svg viewBox="0 0 20 16" className="ml-[20px] h-4 w-5" fill="none" stroke="#1a1a1a" strokeWidth="1.500">
          <path d="M1 6.200a12.700 12.700 0 0 1 18 0M3.800 9a8.800 8.800 0 0 1 12.400 0M6.600 11.700a4.900 4.900 0 0 1 6.800 0" />
          <circle cx="10" cy="14" r="1.300" fill="#1a1a1a" stroke="none" />
        </svg>
        <svg viewBox="0 0 20 16" className="ml-[10px] h-4 w-5" fill="none" stroke="#1a1a1a" strokeWidth="1.300">
          <path d="M1 5.500h3L8.500 1.500v13L4 10.500H1zM12 5l7 6.500M19 5l-7 6.500" />
        </svg>
        <svg viewBox="0 0 21 14" className="ml-[10px] h-[14px] w-[21px]">
          <rect x=".800" y="1.200" width="16.500" height="11.600" rx="2.800" fill="none" stroke="#1a1a1a" strokeWidth="1.500" />
          <rect x="3" y="3.500" width="2.600" height="7" rx=".8" fill="#1a1a1a" />
          <path d="M18 5h1.200c.700 0 1 .4 1 1v2c0 .6-.3 1-1 1H18z" fill="#1a1a1a" />
        </svg>
        <div className="ml-[17px] w-[80px] whitespace-nowrap text-right leading-5 tracking-[0.1px]">16:16<br />01-08-2025</div>
      </div>
    </footer>
  );
}

export default function App() {
  return (
    <div className="flex h-[1080px] w-[1920px] flex-col overflow-hidden font-['Open_Sans','Noto_Sans',sans-serif]">
      <TabStrip />
      <Toolbar />
      <BookmarksBar />
      <div className="flex h-[869px] overflow-hidden">
        <Dashboard />
        <Scrollbar />
      </div>
      <Taskbar />
    </div>
  );
}
